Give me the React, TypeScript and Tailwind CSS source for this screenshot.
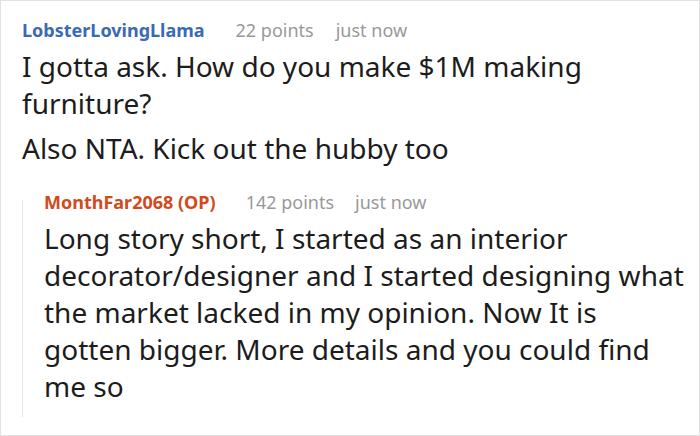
export default function App() {
  return (
    <div
      className="w-[700px] h-[436px] overflow-hidden border border-[#e2e2e2] bg-white text-[#1c1c1c]"
      style={{ fontFamily: '"Noto Sans", "Open Sans", sans-serif' }}
    >
      {/* parent comment */}
      <div className="pl-[21px] pt-[18px]">
        <div className="flex items-baseline text-[18px] leading-[22px] whitespace-nowrap">
          <span className="font-bold text-[#3a6ab4]">LobsterLovingLlama</span>
          <span className="ml-[31px] text-[#999999]">22 points</span>
          <span className="ml-[22px] text-[#999999]">just now</span>
        </div>
        <div className="mt-[7px] text-[28px] leading-[37px] whitespace-nowrap">
          <p>
            I gotta ask. How do you make $1M making
            <br />
            furniture?
          </p>
          <p className="mt-[8px]">Also NTA. Kick out the hubby too</p>
        </div>
      </div>

      {/* reply */}
      <div className="ml-[21px] mt-[24px] flex">
        <div className="w-px bg-[#e4e4e4] mt-[9px]" />
        <div className="pl-[21px] pb-[12px]">
          <div className="flex items-baseline text-[18px] leading-[22px] whitespace-nowrap">
            <span className="font-bold text-[#d24a1c]">MonthFar2068 (OP)</span>
            <span className="ml-[30px] text-[#999999]">142 points</span>
            <span className="ml-[21px] text-[#999999]">just now</span>
          </div>
          <p className="mt-[7px] text-[28px] leading-[37px] whitespace-nowrap">
            Long story short, I started as an interior
            <br />
            decorator/designer and I started designing what
            <br />
            the market lacked in my opinion. Now It is
            <br />
            gotten bigger. More details and you could find
            <br />
            me so
          </p>
        </div>
      </div>
    </div>
  );
}
